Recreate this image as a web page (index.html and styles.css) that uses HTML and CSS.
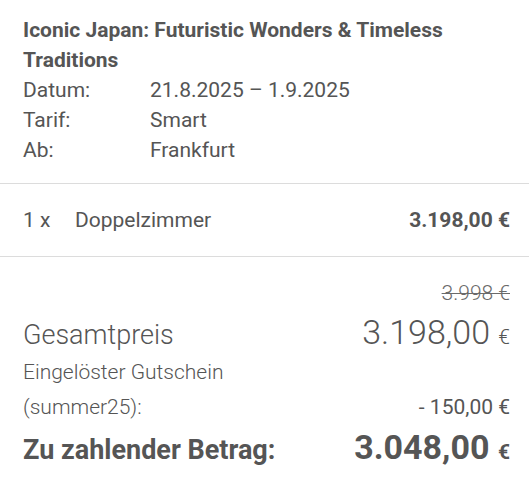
FILE: index.html
```html
<!DOCTYPE html>
<html lang="de">
<head>
<meta charset="utf-8">
<title>Warenkorb</title>
<link rel="stylesheet" href="styles.css">
</head>
<body>
<div class="cart">
  <section class="trip">
    <h2 class="trip-title">Iconic Japan: Futuristic Wonders &amp; Timeless Traditions</h2>
    <dl class="meta">
      <dt>Datum:</dt><dd>21.8.2025 – 1.9.2025</dd>
      <dt>Tarif:</dt><dd>Smart</dd>
      <dt>Ab:</dt><dd>Frankfurt</dd>
    </dl>
  </section>
  <section class="items">
    <div class="item">
      <span class="qty">1 x</span>
      <span class="name">Doppelzimmer</span>
      <span class="price">3.198,00 €</span>
    </div>
  </section>
  <section class="totals">
    <div class="old-price"><s>3.998 €</s></div>
    <div class="row total-row">
      <span class="total-label">Gesamtpreis</span>
      <span class="total-value">3.198,00 <small>€</small></span>
    </div>
    <div class="voucher-label">Eingelöster Gutschein</div>
    <div class="row voucher-row">
      <span>(summer25):</span>
      <span class="voucher-value">- 150,00 €</span>
    </div>
    <div class="row pay-row">
      <span class="pay-label">Zu zahlender Betrag:</span>
      <span class="pay-value">3.048,00 <small>€</small></span>
    </div>
  </section>
</div>
</body>
</html>
```
FILE: styles.css
```css
html, body {
  margin: 0;
  padding: 0;
  background: #fff;
}
body {
  font-family: Roboto, "Liberation Sans", sans-serif;
  color: #555;
  font-size: 21px;
}
.cart {
  width: 529px;
}
.trip {
  padding: 15px 19px 18px 23px;
  border-bottom: 1px solid #dcdcdc;
}
.trip-title {
  margin: 0;
  font-size: 21px;
  font-weight: 700;
  line-height: 30px;
}
.meta {
  margin: 0;
  display: grid;
  grid-template-columns: 127px 1fr;
  line-height: 30px;
}
.meta dt, .meta dd {
  margin: 0;
}
.items {
  padding: 0 19px 0 23px;
  border-bottom: 1px solid #dcdcdc;
}
.item {
  height: 72px;
  display: flex;
  align-items: center;
}
.qty {
  width: 52px;
}
.name {
  flex: 1;
}
.price {
  font-weight: 700;
}
.totals {
  padding: 21px 19px 10px 23px;
}
.old-price {
  text-align: right;
  line-height: 30px;
  color: #6a6a6a;
  font-weight: 300;
}
.old-price s {
  text-decoration-thickness: 1px;
}
.row {
  display: flex;
  justify-content: space-between;
  align-items: baseline;
}
.total-row {
  font-weight: 300;
  line-height: 40px;
  margin-top: 4px;
}
.total-label {
  font-size: 27px;
}
.total-value {
  font-size: 34px;
}
.total-value small {
  font-size: 21px;
}
.voucher-label {
  font-weight: 300;
  line-height: 30px;
}
.voucher-row {
  font-weight: 300;
  line-height: 40px;
}
.voucher-value {
  font-weight: 400;
}
.pay-row {
  font-weight: 700;
  line-height: 40px;
}
.pay-label {
  font-size: 27px;
}
.pay-value {
  font-size: 34px;
}
.pay-value small {
  font-size: 21px;
}
```
